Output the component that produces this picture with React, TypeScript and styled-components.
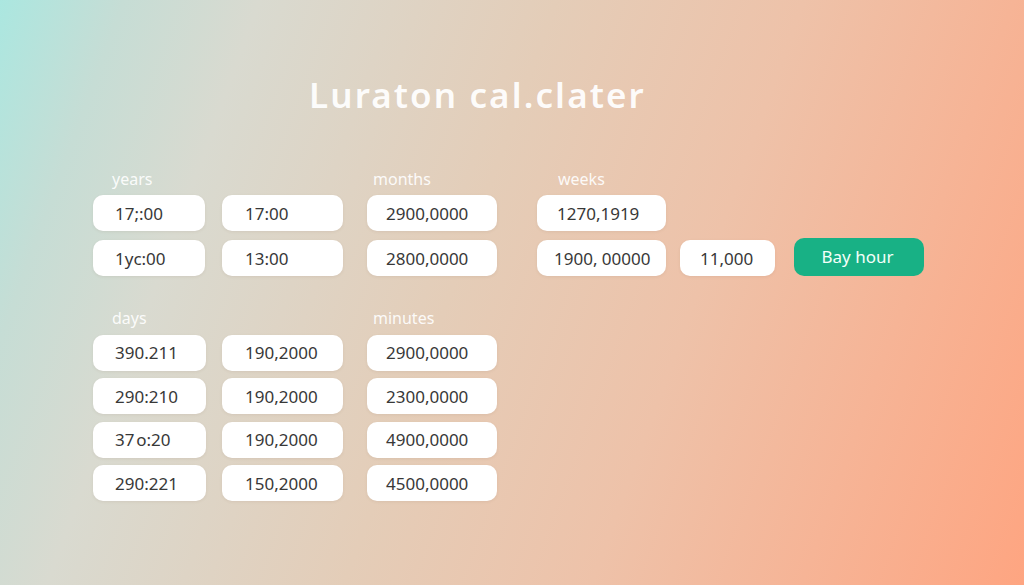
import React from "react";
import styled, { createGlobalStyle } from "styled-components";

const Global = createGlobalStyle`
  html, body { margin: 0; padding: 0; }
  body {
    width: 1024px;
    height: 585px;
    overflow: hidden;
    font-family: "Noto Sans", "Open Sans", sans-serif;
  }
`;

const Page = styled.main`
  box-sizing: border-box;
  width: 1024px;
  height: 585px;
  padding: 75px 0 0 93px;
  background: linear-gradient(
    110deg,
    #abe7e0 0%,
    #c6ddd5 10%,
    #d9dad0 21%,
    #e4cdb8 45%,
    #eec2a9 65%,
    #f6b496 82%,
    #fea581 100%
  );
  display: flex;
  flex-direction: column;
`;

const Title = styled.h1`
  margin: 0 0 0 216px;
  font-family: "Noto Sans", "Open Sans", sans-serif;
  font-weight: 600;
  font-size: 35px;
  line-height: 40px;
  letter-spacing: 2.1px;
  color: rgba(255, 255, 255, 0.94);
`;

const Grid = styled.section<{ $top: number; $gap: number; $rows: string }>`
  margin-top: ${(p) => p.$top}px;
  display: grid;
  grid-template-columns: 129px 145px 170px 143px 114px 130px;
  grid-template-rows: ${(p) => p.$rows};
  row-gap: ${(p) => p.$gap}px;
  align-items: center;
`;

const Label = styled.div<{ $col: number; $indent: number }>`
  grid-column: ${(p) => p.$col};
  grid-row: 1;
  padding-left: ${(p) => p.$indent}px;
  font-size: 16px;
  line-height: 20px;
  color: rgba(255, 255, 255, 0.92);
`;

const Field = styled.div<{ $w: number; $pad: number; $h: number }>`
  box-sizing: border-box;
  width: ${(p) => p.$w}px;
  height: ${(p) => p.$h}px;
  padding-left: ${(p) => p.$pad}px;
  display: flex;
  align-items: center;
  background: #ffffff;
  border-radius: 10px;
  box-shadow: 0 1px 3px rgba(120, 90, 70, 0.1);
  font-size: 17px;
  color: #383838;
  white-space: pre;
`;

const Empty = styled.div``;

const Action = styled.button`
  box-sizing: border-box;
  width: 130px;
  height: 38px;
  margin: -3px 0 0 0;
  border: none;
  border-radius: 10px;
  background: #18b185;
  color: #f4fff9;
  font-family: "Noto Sans", sans-serif;
  font-size: 17px;
  display: flex;
  align-items: center;
  justify-content: center;
  padding: 0 3px 0 0;
  cursor: pointer;
`;

type F = { t: string; w: number; pad: number } | null;

const top1: F[][] = [
  [
    { t: "17;:00", w: 112, pad: 22 },
    { t: "17:00", w: 121, pad: 23 },
    { t: "2900,0000", w: 130, pad: 19 },
    { t: "1270,1919", w: 129, pad: 20 },
    null,
    null,
  ],
  [
    { t: "1yc:00", w: 112, pad: 22 },
    { t: "13:00", w: 121, pad: 23 },
    { t: "2800,0000", w: 130, pad: 19 },
    { t: "1900, 00000", w: 129, pad: 17 },
    { t: "11,000", w: 95, pad: 20 },
    null,
  ],
];

const bottom: string[][] = [
  ["390.211", "190,2000", "2900,0000"],
  ["290:210", "190,2000", "2300,0000"],
  ["37\u200Ao:20", "190,2000", "4900,0000"],
  ["290:221", "150,2000", "4500,0000"],
];

export default function App() {
  return (
    <>
      <Global />
      <Page>
        <Title>Luraton cal.clater</Title>

        <Grid $top={54} $gap={0} $rows="20px 6px 36px 8px 38px">
          <Label $col={1} $indent={19}>years</Label>
          <Label $col={3} $indent={6}>months</Label>
          <Label $col={4} $indent={21}>weeks</Label>
          {top1.map((row, r) =>
            row.map((f, c) => {
              const style = { gridRow: r === 0 ? 3 : 5, gridColumn: c + 1 };
              if (r === 1 && c === 5)
                return (
                  <Action key={`${r}-${c}`} style={style}>
                    Bay hour
                  </Action>
                );
              if (!f) return <Empty key={`${r}-${c}`} style={style} />;
              return (
                <Field
                  key={`${r}-${c}`}
                  style={style}
                  $w={f.w}
                  $h={36}
                  $pad={f.pad}
                >
                  {f.t}
                </Field>
              );
            })
          )}
        </Grid>

        <Grid $top={32} $gap={7.5} $rows="18px repeat(4, 36px)">
          <Label $col={1} $indent={19}>days</Label>
          <Label $col={3} $indent={6}>minutes</Label>
          {bottom.map((row, r) =>
            row.map((t, c) => (
              <Field
                key={`b-${r}-${c}`}
                style={{ gridRow: r + 2, gridColumn: c + 1 }}
                $w={[113, 121, 130][c]}
                $h={36}
                $pad={[22, 23, 19][c]}
              >
                {t}
              </Field>
            ))
          )}
        </Grid>
      </Page>
    </>
  );
}
